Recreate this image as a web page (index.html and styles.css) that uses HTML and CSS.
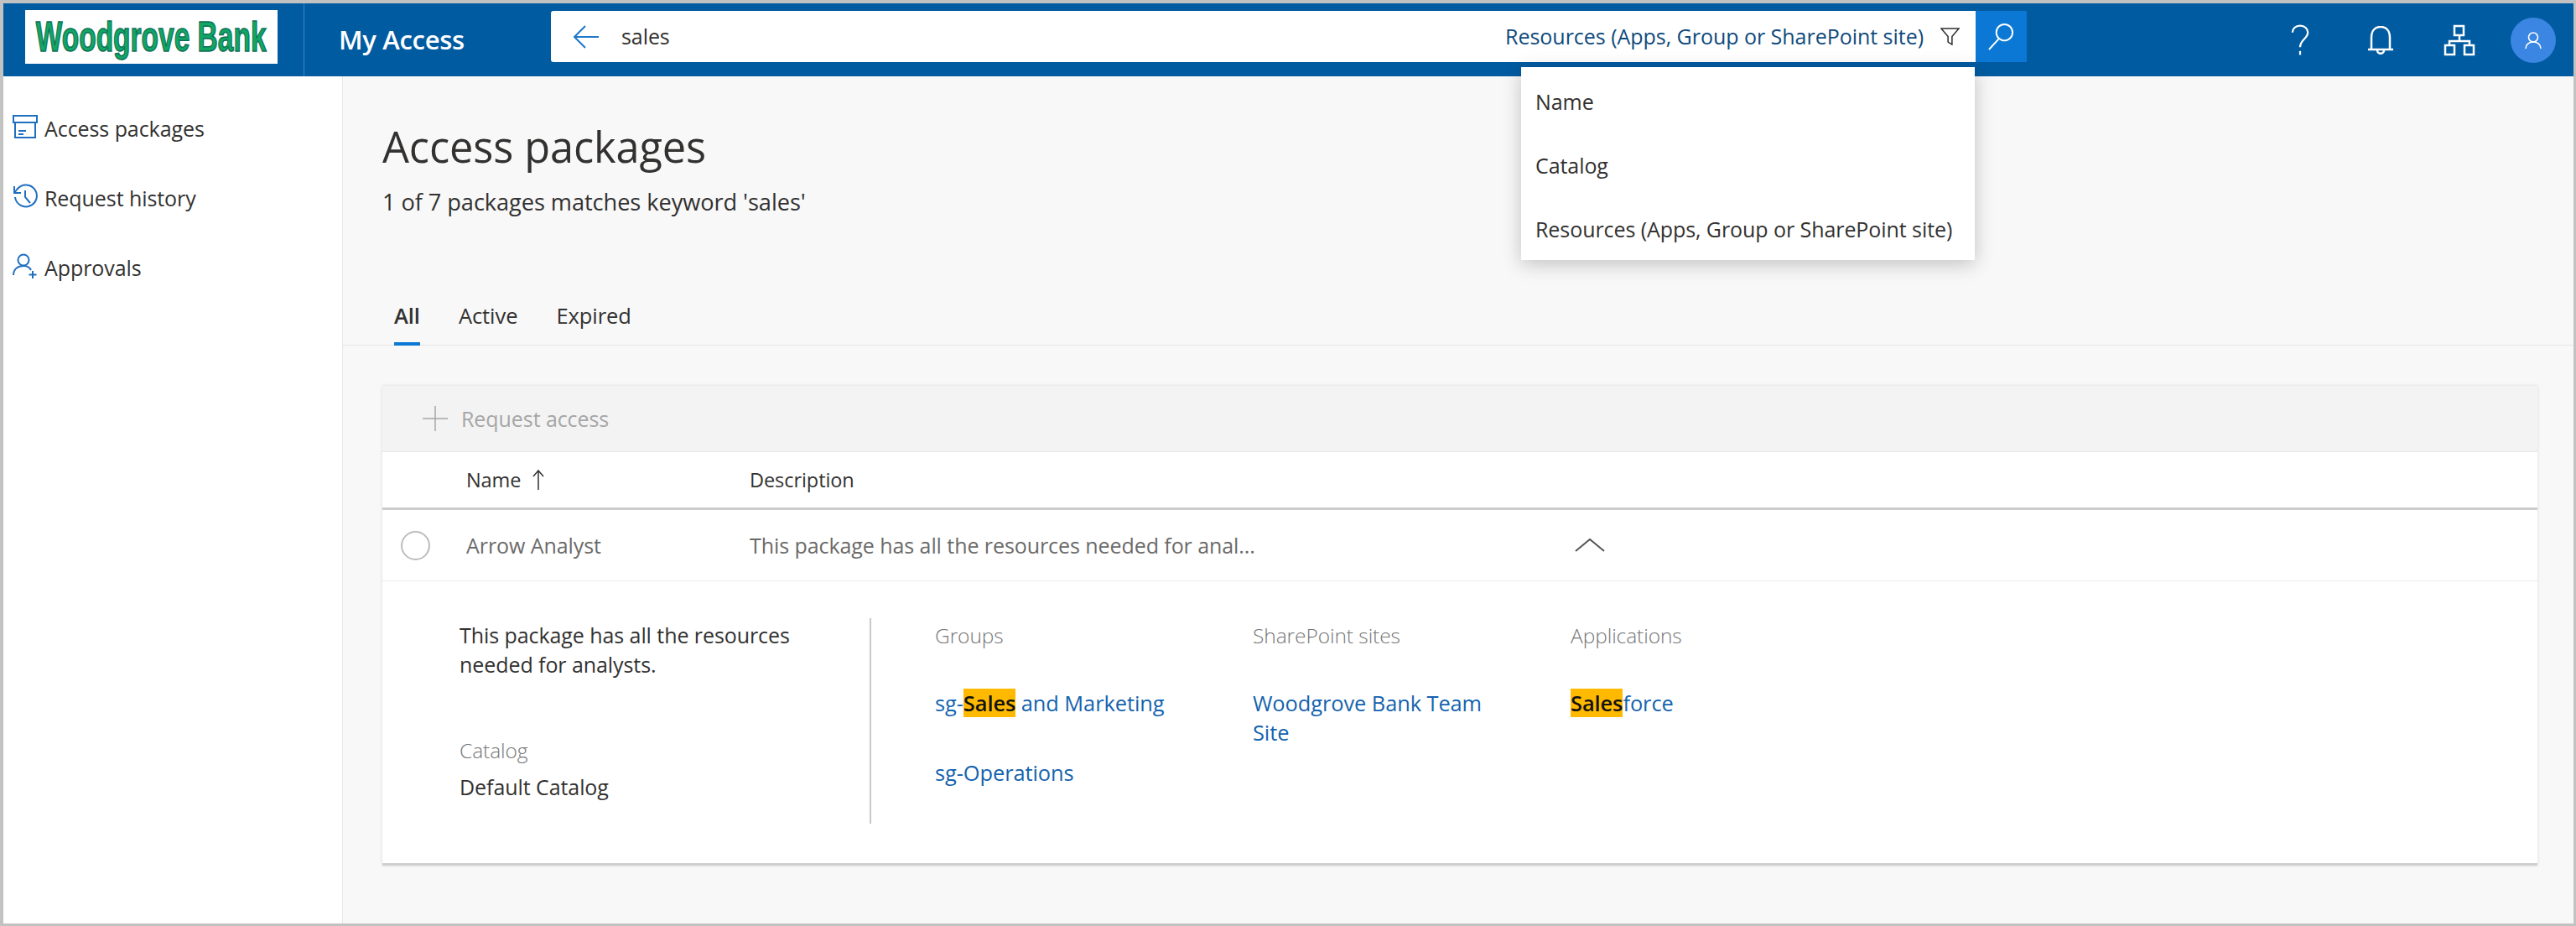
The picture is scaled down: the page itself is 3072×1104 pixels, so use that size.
FILE: index.html
```html
<!DOCTYPE html>
<html lang="en">
<head>
    <meta charset="UTF-8">
    <meta name="viewport" content="width=device-width, initial-scale=1.0">
    <title>My Access</title>
    <link rel="stylesheet" href="styles.css">
</head>
<body>
<div class="frame">
    <header class="topbar">
        <div class="brand">
            <div class="logo"><span class="logo-text">Woodgrove Bank</span></div>
        </div>
        <div class="app-name">My Access</div>
        <div class="search">
            <svg class="back-icon" viewBox="0 0 30 28"><path d="M14 1 1 14l13 13M1 14h29"/></svg>
            <span class="search-term">sales</span>
            <span class="search-scope">Resources (Apps, Group or SharePoint site)</span>
            <svg class="filter-icon" viewBox="0 0 24 22"><path d="M1 1h22l-8.500 10v10l-5-3v-7z"/></svg>
        </div>
        <button class="search-btn">
            <svg viewBox="0 0 32 34"><circle cx="20" cy="12" r="10"/><path d="M13 20 1 33"/></svg>
        </button>
        <div class="top-icons">
            <svg class="help-icon" viewBox="0 0 24 40"><path d="M2 10C2 5 6 1 12 1s10 4 10 9c0 8-10 9-10 19"/><path d="M12 34v5"/></svg>
            <svg class="bell-icon" viewBox="0 0 30 34"><path d="M4 28V14C4 6 8 1 15 1s11 5 11 13v14M0 28h30M11 29c0 5 8 5 8 0"/></svg>
            <svg class="org-icon" viewBox="0 0 38 38"><rect x="13" y="2" width="11" height="11"/><rect x="2" y="25" width="11" height="11"/><rect x="25" y="25" width="11" height="11"/><path d="M19 13v7M7 25v-5h24v5"/></svg>
            <div class="avatar">
                <svg viewBox="0 0 20 20"><circle cx="10" cy="6.500" r="5.500"/><path d="M1 20c0-5 4-8 9-8s9 3 9 8"/></svg>
            </div>
        </div>
    </header>

    <ul class="scope-menu">
        <li>Name</li>
        <li>Catalog</li>
        <li>Resources (Apps, Group or SharePoint site)</li>
    </ul>

    <div class="body-wrap">
        <nav class="sidebar">
            <a class="nav-item">
                <svg viewBox="0 0 30 30"><path d="M1 2h28v8H1zM3 10v18h24V10M7 20h9M7 24h6"/></svg>
                Access packages
            </a>
            <a class="nav-item">
                <svg viewBox="0 0 30 30"><path d="M3 16a13 13 0 1 0 3-10L2 11M2 3v8h8M15 8v8l6 7"/></svg>
                Request history
            </a>
            <a class="nav-item">
                <svg viewBox="0 0 30 30"><circle cx="13" cy="8" r="6.500"/><path d="M1 26c0-7 5-11 12-11 4 0 7 1 9 5M24 21v9M19.500 25.500h9"/></svg>
                Approvals
            </a>
        </nav>

        <main class="content">
            <h1 class="title">Access packages</h1>
            <p class="subtitle">1 of 7 packages matches keyword 'sales'</p>

            <div class="tabs">
                <a class="tab active">All</a>
                <a class="tab">Active</a>
                <a class="tab">Expired</a>
            </div>

            <section class="card">
                <div class="toolbar">
                    <svg class="plus-icon" viewBox="0 0 30 30"><path d="M15 0v30M0 15h30"/></svg>
                    Request access
                </div>
                <div class="table-head">
                    <span class="col-name">Name <svg class="sort-icon" viewBox="0 0 14 24"><path d="M7 24V1M1 8l6-7 6 7"/></svg></span>
                    <span>Description</span>
                </div>
                <div class="table-row">
                    <span class="radio"></span>
                    <span class="col-name row-cell">Arrow Analyst</span>
                    <span class="col-desc row-cell">This package has all the resources needed for anal...</span>
                    <svg class="chevron" viewBox="0 0 36 16"><path d="M1 15 18 1l17 14"/></svg>
                </div>
                <div class="details">
                    <div class="details-left">
                        <p class="about">This package has all the resources needed for analysts.</p>
                        <div class="muted catalog-label">Catalog</div>
                        <div class="catalog-name">Default Catalog</div>
                    </div>
                    <div class="resource-col">
                        <div class="muted">Groups</div>
                        <a class="link"><span>sg-</span><mark>Sales</mark> and Marketing</a>
                        <a class="link">sg-Operations</a>
                    </div>
                    <div class="resource-col">
                        <div class="muted">SharePoint sites</div>
                        <a class="link">Woodgrove Bank Team Site</a>
                    </div>
                    <div class="resource-col">
                        <div class="muted">Applications</div>
                        <a class="link"><mark>Sales</mark>force</a>
                    </div>
                </div>
            </section>
        </main>
    </div>
</div>
</body>
</html>
```

FILE: styles.css
```css
* {
    box-sizing: border-box;
}
body {
    margin: 0;
    font-family: "Open Sans", Arial, sans-serif;
    font-size: 25px;
    line-height: 35px;
    letter-spacing: -0.07px;
    color: #323130;
}
svg {
    fill: none;
    display: block;
}

.frame {
    position: relative;
    width: 3072px;
    height: 1104px;
    border: solid #c2c2c2;
    border-width: 4px 3px 3px 4px;
    display: flex;
    flex-direction: column;
    overflow: hidden;
    background: #fff;
}

/* top bar */
.topbar {
    height: 87px;
    flex: none;
    display: flex;
    align-items: flex-start;
    background: #015ba1;
    color: #fff;
}
.brand {
    width: 359px;
    height: 87px;
    padding: 8px 0 0 26px;
    border-right: 1px solid #3f83b8;
}
.logo {
    width: 301px;
    height: 64px;
    background: #fff;
    display: flex;
    align-items: center;
    justify-content: center;
    overflow: hidden;
}
.logo-text {
    font-family: "Liberation Sans", Arial, sans-serif;
    font-weight: bold;
    font-size: 50px;
    letter-spacing: 0;
    white-space: nowrap;
    color: #12a563;
    -webkit-text-stroke: 1.5px #0b7058;
    transform: scaleX(0.67);
}
.app-name {
    width: 294px;
    padding-left: 41px;
    font-size: 31px;
    font-weight: 600;
    line-height: 87px;
    letter-spacing: -0.3px;
    white-space: nowrap;
}
.search {
    margin-top: 9px;
    width: 1699px;
    height: 61px;
    background: #fff;
    border-radius: 3px 0 0 3px;
    display: flex;
    align-items: center;
    padding: 0 19px 0 27px;
}
.back-icon {
    width: 30px;
    height: 28px;
    stroke: #1f78c8;
    stroke-width: 2;
}
.search-term {
    margin-left: 27px;
    color: #323130;
}
.search-scope {
    margin-left: auto;
    color: #0f4a7c;
    letter-spacing: -0.03px;
}
.filter-icon {
    margin-left: 20px;
    width: 23px;
    height: 21px;
    stroke: #323130;
    stroke-width: 1.600;
}
.search-btn {
    margin-top: 9px;
    width: 61px;
    height: 61px;
    padding: 0;
    border: none;
    background: #0a78d4;
    display: flex;
    align-items: center;
    justify-content: center;
}
.search-btn svg {
    width: 31px;
    height: 33px;
    stroke: #fff;
    stroke-width: 2;
}
.top-icons {
    flex: 1;
    height: 87px;
    display: flex;
    align-items: center;
    padding-left: 315px;
}
.top-icons svg {
    stroke: #fff;
    stroke-width: 2.500;
}
.help-icon {
    width: 22px;
    height: 38px;
}
.bell-icon {
    margin-left: 70px;
    width: 30px;
    height: 34px;
}
.org-icon {
    margin-left: 60px;
    width: 38px;
    height: 38px;
}
.avatar {
    margin-left: 42px;
    width: 54px;
    height: 54px;
    border-radius: 50%;
    background: #3a86e2;
    display: flex;
    align-items: center;
    justify-content: center;
}
.avatar svg {
    width: 20px;
    height: 20px;
    stroke-width: 1.600;
}

/* search scope dropdown */
.scope-menu {
    position: absolute;
    left: 1810px;
    top: 76px;
    width: 541px;
    height: 230px;
    margin: 0;
    padding: 4px 0 0 17px;
    list-style: none;
    background: #fff;
    box-shadow: 0 5px 22px rgba(0, 0, 0, 0.22);
    z-index: 2;
}
.scope-menu li {
    height: 76px;
    line-height: 74px;
    white-space: nowrap;
}

.body-wrap {
    flex: 1;
    display: flex;
    min-height: 0;
}

/* left nav */
.sidebar {
    width: 405px;
    flex: none;
    padding-top: 44px;
    border-right: 1px solid #e8e8e8;
    display: flex;
    flex-direction: column;
    gap: 47px;
}
.nav-item {
    display: flex;
    align-items: center;
    gap: 8px;
    height: 36px;
    padding-left: 11px;
}
.nav-item svg {
    width: 30px;
    height: 30px;
    margin-bottom: 5px;
    stroke: #1f6fc0;
    stroke-width: 2;
}

/* main */
.content {
    flex: 1;
    background: #f8f8f8;
    min-width: 0;
}
.title {
    margin: 54px 0 0 47px;
    font-size: 50.500px;
    font-weight: 400;
    line-height: 60px;
    letter-spacing: -0.1px;
}
.subtitle {
    margin: 18px 0 0 47px;
    font-size: 27.200px;
    line-height: 36px;
}
.tabs {
    margin-top: 99px;
    padding-left: 61px;
    display: flex;
    gap: 46px;
    border-bottom: 1px solid #e6e6e6;
    font-size: 25.500px;
}
.tab {
    line-height: 36px;
    padding-bottom: 14px;
    border-bottom: 4px solid transparent;
    margin-bottom: -1px;
}
.tab.active {
    font-weight: 600;
    border-bottom-color: #0a78d4;
}

.card {
    margin: 48px 43px 0 47px;
    background: #fff;
    border-bottom: 3px solid #cfcfcf;
    box-shadow: 0 0 4px rgba(0, 0, 0, 0.12);
}
.toolbar {
    height: 78px;
    display: flex;
    align-items: center;
    gap: 16px;
    padding-left: 48px;
    background: #f3f3f3;
    color: #a6a6a6;
}
.plus-icon {
    width: 30px;
    height: 30px;
    stroke: #a6a6a6;
    stroke-width: 1.500;
}
.table-head {
    height: 70px;
    display: flex;
    align-items: center;
    padding-left: 100px;
    border-top: 1px solid #e6e6e6;
    border-bottom: 3px solid #cccccc;
    font-size: 23.500px;
}
.col-name {
    width: 338px;
    display: flex;
    align-items: center;
    gap: 14px;
}
.sort-icon {
    width: 14px;
    height: 24px;
    stroke: #323130;
    stroke-width: 1.500;
}
.table-row {
    height: 85px;
    display: flex;
    align-items: center;
    padding-left: 22px;
    border-bottom: 1px solid #ececec;
    color: #6b6a69;
}
.radio {
    width: 35px;
    height: 35px;
    border: 2px solid #bdbdbd;
    border-radius: 50%;
    margin-right: 43px;
}
.col-desc {
    width: 984px;
    white-space: nowrap;
}
.chevron {
    width: 36px;
    height: 16px;
    stroke: #555;
    stroke-width: 2;
}
.details {
    height: 336px;
    padding: 44px 0 0 92px;
    display: flex;
    align-items: flex-start;
}
.details-left {
    width: 491px;
    height: 245px;
    padding-right: 60px;
    border-right: 2px solid #c8c8c8;
}
.about {
    margin: 3px 0 0;
    width: 420px;
}
.muted {
    color: #767676;
    font-weight: 300;
    font-size: 24.500px;
}
.catalog-label {
    margin-top: 67px;
}
.catalog-name {
    margin-top: 9px;
}
.resource-col {
    width: 379px;
    margin-top: 3px;
    padding-right: 90px;
    display: flex;
    flex-direction: column;
}
.details-left + .resource-col {
    margin-left: 76px;
}
.link {
    display: block;
    color: #1463ae;
    font-size: 25.400px;
    margin-top: 46px;
}
.link + .link {
    margin-top: 48px;
}
mark {
    background: #ffb900;
    color: #111;
    font-weight: 600;
}
```
